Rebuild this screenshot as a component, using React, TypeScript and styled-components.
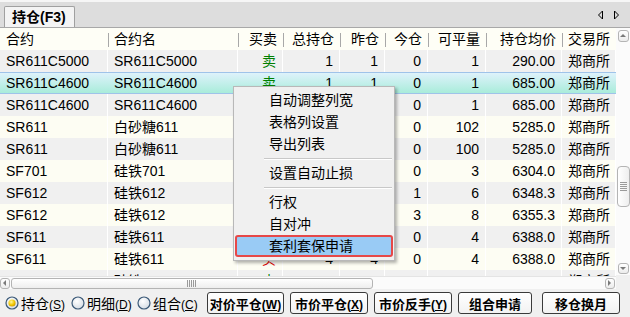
import styled, { createGlobalStyle } from 'styled-components'

const GlobalStyle = createGlobalStyle`
  html, body {
    margin: 0;
    padding: 0;
    background: #f0f0f0;
  }
  body {
    font-family: "Liberation Sans", "Noto Sans CJK SC", sans-serif;
  }
`

type Align = 'left' | 'right'

interface IColumn {
  key: keyof IRow
  title: string
  width: number
  align: Align
}

interface IRow {
  code: string
  name: string
  side: '买' | '卖'
  total: string
  yest: string
  today: string
  avail: string
  price: string
  exch: string
}

const columns: IColumn[] = [
  { key: 'code', title: '合约', width: 108, align: 'left' },
  { key: 'name', title: '合约名', width: 130, align: 'left' },
  { key: 'side', title: '买卖', width: 45, align: 'right' },
  { key: 'total', title: '总持仓', width: 57, align: 'right' },
  { key: 'yest', title: '昨仓', width: 45, align: 'right' },
  { key: 'today', title: '今仓', width: 43, align: 'right' },
  { key: 'avail', title: '可平量', width: 58, align: 'right' },
  { key: 'price', title: '持仓均价', width: 76, align: 'right' },
  { key: 'exch', title: '交易所', width: 54, align: 'left' },
]

const row = (
  code: string,
  name: string,
  side: '买' | '卖',
  total: string,
  yest: string,
  today: string,
  avail: string,
  price: string,
): IRow => ({ code, name, side, total, yest, today, avail, price, exch: '郑商所' })

const rows: IRow[] = [
  row('SR611C5000', 'SR611C5000', '卖', '1', '1', '0', '1', '290.00'),
  row('SR611C4600', 'SR611C4600', '卖', '1', '1', '0', '1', '685.00'),
  row('SR611C4600', 'SR611C4600', '卖', '1', '1', '0', '1', '685.00'),
  row('SR611', '白砂糖611', '买', '102', '102', '0', '102', '5285.0'),
  row('SR611', '白砂糖611', '买', '100', '100', '0', '100', '5285.0'),
  row('SF701', '硅铁701', '买', '3', '3', '0', '3', '6304.0'),
  row('SF612', '硅铁612', '买', '7', '6', '1', '6', '6348.3'),
  row('SF612', '硅铁612', '买', '11', '8', '3', '8', '6355.3'),
  row('SF611', '硅铁611', '买', '4', '4', '0', '4', '6388.0'),
  row('SF611', '硅铁611', '买', '4', '4', '0', '4', '6388.0'),
  row('SF609', '硅铁609', '卖', '2', '2', '0', '2', '6120.0'),
]

const SELECTED = 1

type MenuEntry = { label: string; active?: boolean } | 'sep'

const menu: MenuEntry[] = [
  { label: '自动调整列宽' },
  { label: '表格列设置' },
  { label: '导出列表' },
  'sep',
  { label: '设置自动止损' },
  'sep',
  { label: '行权' },
  { label: '自对冲' },
  { label: '套利套保申请', active: true },
]

const radios = [
  { label: '持仓', key: 'S', checked: true },
  { label: '明细', key: 'D' },
  { label: '组合', key: 'C' },
]

const buttons = [
  { label: '对价平仓', key: 'W', width: 77 },
  { label: '市价平仓', key: 'X', width: 78 },
  { label: '市价反手', key: 'Y', width: 78 },
  { label: '组合申请', width: 74 },
  { label: '移仓换月', width: 78 },
]

function Radio({ checked }: { checked?: boolean }) {
  return (
    <svg width="14" height="14" viewBox="0 0 14 14">
      <defs>
        <radialGradient id="rbg" cx="0.4" cy="0.35" r="0.7">
          <stop offset="0" stopColor="#ffffff" />
          <stop offset="1" stopColor="#d4dbe3" />
        </radialGradient>
        <radialGradient id="rdot" cx="0.4" cy="0.35" r="0.7">
          <stop offset="0" stopColor="#fff7a0" />
          <stop offset="0.6" stopColor="#f2c800" />
          <stop offset="1" stopColor="#c89400" />
        </radialGradient>
      </defs>
      <circle cx="7" cy="7" r="6" fill="url(#rbg)" stroke="#3c5a78" strokeWidth="1.2" />
      {checked && <circle cx="7" cy="7" r="3.6" fill="url(#rdot)" />}
    </svg>
  )
}

function Arrow({ dir, color = '#7a7a7a' }: { dir: 'up' | 'down' | 'left' | 'right'; color?: string }) {
  const pts = {
    up: '1,5 4,2 7,5',
    down: '1,2 4,5 7,2',
    left: '5,1 2,4 5,7',
    right: '2,1 5,4 2,7',
  }[dir]
  return (
    <svg width="8" height="8" viewBox="0 0 8 8">
      <polygon points={pts} fill={color} />
    </svg>
  )
}

function Grip({ vertical }: { vertical?: boolean }) {
  const lines = [0, 2, 4, 6, 8]
  return vertical ? (
    <svg width="7" height="10" viewBox="0 0 7 10">
      {lines.map((y) => (
        <line key={y} x1="0" y1={y + 0.5} x2="7" y2={y + 0.5} stroke="#9a9a9a" />
      ))}
    </svg>
  ) : (
    <svg width="10" height="7" viewBox="0 0 10 7">
      {lines.map((x) => (
        <line key={x} x1={x + 0.5} y1="0" x2={x + 0.5} y2="7" stroke="#9a9a9a" />
      ))}
    </svg>
  )
}

export default function App() {
  return (
    <Window>
      <GlobalStyle />
      <TabBar>
        <Tab>持仓(F3)</Tab>
        <TabArrows>
          <svg width="7" height="10" viewBox="0 0 7 10">
            <polygon points="5.5,1 1.5,5 5.5,9" fill="none" stroke="#000" />
          </svg>
          <svg width="7" height="10" viewBox="0 0 7 10">
            <polygon points="1.5,1 5.5,5 1.5,9" fill="none" stroke="#000" />
          </svg>
        </TabArrows>
      </TabBar>

      <Body>
        <GridColumn>
          <Table>
            <HeaderRow>
              {columns.map((c, i) => (
                <HeaderCell key={c.key} $w={c.width} $align={c.align} $sep={i > 0}>
                  {c.title}
                </HeaderCell>
              ))}
            </HeaderRow>
            {rows.map((r, i) => (
              <Row key={i} $variant={i === SELECTED ? 'selected' : i % 2 === 0 ? 'gray' : 'cream'}>
                {columns.map((c) => (
                  <Cell
                    key={c.key}
                    $w={c.width}
                    $align={c.align}
                    $color={c.key === 'side' ? (r.side === '卖' ? '#008000' : '#e00000') : undefined}
                  >
                    {r[c.key]}
                  </Cell>
                ))}
              </Row>
            ))}
          </Table>
          <HScroll>
            <ScrollBtn $w={10}>
              <Arrow dir="left" />
            </ScrollBtn>
            <HThumb>
              <Grip />
            </HThumb>
            <ScrollBtn $w={10} $push>
              <Arrow dir="right" />
            </ScrollBtn>
          </HScroll>
        </GridColumn>

        <VScroll>
          <ScrollBtn $w={11} $h={12}>
            <Arrow dir="up" />
          </ScrollBtn>
          <VThumb $offset={124}>
            <Grip vertical />
          </VThumb>
          <ScrollBtn $w={11} $h={11} $push>
            <Arrow dir="down" />
          </ScrollBtn>
          <Corner />
        </VScroll>
      </Body>

      <BottomBar>
        <RadioGroup>
          {radios.map((r) => (
            <RadioLabel key={r.key}>
              <Radio checked={r.checked} />
              <span>
                {r.label}
                <Key>
                  (<u>{r.key}</u>)
                </Key>
              </span>
            </RadioLabel>
          ))}
        </RadioGroup>
        <ButtonRow>
          {buttons.map((b) => (
            <ActionButton key={b.label} $w={b.width}>
              {b.label}
              {b.key && (
                <Key>
                  (<u>{b.key}</u>)
                </Key>
              )}
            </ActionButton>
          ))}
        </ButtonRow>
      </BottomBar>

      <ContextMenu>
        {menu.map((m, i) =>
          m === 'sep' ? (
            <MenuSep key={i} />
          ) : (
            <MenuItem key={i} $active={m.active}>
              {m.label}
            </MenuItem>
          ),
        )}
      </ContextMenu>
    </Window>
  )
}

const Window = styled.div`
  position: relative;
  width: 630px;
  height: 317px;
  display: flex;
  flex-direction: column;
  background: #f0f0f0;
  overflow: hidden;
  color: #000;
  font-size: 14px;
`

const TabBar = styled.div`
  height: 28px;
  box-sizing: border-box;
  display: flex;
  align-items: flex-end;
  justify-content: space-between;
  padding-left: 4px;
  background: #dddddd;
  border-top: 2px solid #f6f6f6;
  border-bottom: 1px solid #a8a8a8;
`

const Tab = styled.div`
  height: 21px;
  box-sizing: border-box;
  padding: 0 8px 0 7px;
  border: 1px solid #a0a0a0;
  border-bottom: none;
  border-radius: 2px 2px 0 0;
  background: #f4f4f4;
  font-weight: bold;
  font-size: 14px;
  line-height: 20px;
`

const TabArrows = styled.div`
  align-self: center;
  display: flex;
  gap: 9px;
  padding-right: 10px;
  margin-top: 1px;
`

const Body = styled.div`
  display: flex;
  height: 261px;
`

const GridColumn = styled.div`
  width: 616px;
  display: flex;
  flex-direction: column;
`

const Table = styled.div`
  height: 248px;
  overflow: hidden;
  background: #fdfdf5;
`

const HeaderRow = styled.div`
  display: flex;
  height: 22px;
  background: #fefef6;
`

const HeaderCell = styled.div<{ $w: number; $align: Align; $sep: boolean }>`
  position: relative;
  width: ${(p) => p.$w}px;
  flex: none;
  box-sizing: border-box;
  padding: 0 6px;
  text-align: ${(p) => p.$align};
  line-height: 22px;
  white-space: nowrap;

  &::before {
    content: '';
    display: ${(p) => (p.$sep ? 'block' : 'none')};
    position: absolute;
    left: 0;
    top: 5px;
    width: 1px;
    height: 14px;
    background: #a8a8a8;
  }
`

const variants = {
  gray: 'background: #f0f0f0;',
  cream: 'background: #fdfdf3;',
  selected: `
    background: linear-gradient(#def2fb, #a9ecda);
    border-top: 1px solid #9fc3e9;
    border-bottom: 1px solid #9fc3e9;
  `,
}

const Row = styled.div<{ $variant: keyof typeof variants }>`
  display: flex;
  height: 22px;
  box-sizing: border-box;
  ${(p) => variants[p.$variant]}

  & > div {
    border-right-color: ${(p) => (p.$variant === 'selected' ? 'transparent' : '#ffffff')};
    line-height: ${(p) => (p.$variant === 'selected' ? '20px' : '22px')};
  }
`

const Cell = styled.div<{ $w: number; $align: Align; $color?: string }>`
  width: ${(p) => p.$w}px;
  flex: none;
  box-sizing: border-box;
  padding: 0 6px;
  border-right: 1px solid #ffffff;
  text-align: ${(p) => p.$align};
  color: ${(p) => p.$color ?? '#000'};
  white-space: nowrap;
  overflow: hidden;
`

const ScrollBtn = styled.div<{ $w: number; $h?: number; $push?: boolean }>`
  width: ${(p) => p.$w}px;
  height: ${(p) => p.$h ?? 11}px;
  flex: none;
  box-sizing: border-box;
  display: flex;
  align-items: center;
  justify-content: center;
  border: 1px solid #b4b4b4;
  border-radius: 3px;
  background: linear-gradient(#ffffff, #ececec);
  margin-${(p) => (p.$h ? 'top' : 'left')}: ${(p) => (p.$push ? 'auto' : '0')};
`

const HScroll = styled.div`
  height: 13px;
  display: flex;
  align-items: center;
  gap: 1px;
  padding: 0 1px 0 0;
  background: #fbfbfb;
  border-top: 1px solid #e4e4e4;
  box-sizing: border-box;
`

const HThumb = styled.div`
  width: 362px;
  height: 11px;
  box-sizing: border-box;
  display: flex;
  align-items: center;
  justify-content: center;
  border: 1px solid #b4b4b4;
  border-radius: 3px;
  background: linear-gradient(#ffffff, #eeeeee);
`

const VScroll = styled.div`
  width: 14px;
  display: flex;
  flex-direction: column;
  align-items: center;
  padding-top: 2px;
  box-sizing: border-box;
  background: #fbfbfb;
`

const VThumb = styled.div<{ $offset: number }>`
  margin-top: ${(p) => p.$offset}px;
  width: 13px;
  height: 41px;
  box-sizing: border-box;
  display: flex;
  align-items: center;
  justify-content: center;
  border: 1px solid #b4b4b4;
  border-radius: 4px;
  background: linear-gradient(90deg, #ffffff, #eeeeee);
`

const Corner = styled.div`
  height: 14px;
  width: 14px;
  margin-top: 1px;
  background: #f0f0f0;
`

const BottomBar = styled.div`
  height: 28px;
  display: flex;
  align-items: center;
  padding-left: 5px;
  background: #f0f0f0;
`

const RadioGroup = styled.div`
  display: flex;
  width: 202px;
`

const RadioLabel = styled.label`
  width: 66px;
  display: flex;
  align-items: center;
  gap: 2px;
  font-size: 14px;
  white-space: nowrap;

  & svg {
    flex: none;
  }
`

const Key = styled.span`
  font-size: 12px;

  & u {
    text-underline-offset: 1px;
  }
`

const ButtonRow = styled.div`
  display: flex;
  gap: 6px;

  & > :last-child {
    margin-left: 4px;
  }
`

const ActionButton = styled.button<{ $w: number }>`
  width: ${(p) => p.$w}px;
  height: 22px;
  padding: 0;
  box-sizing: border-box;
  border: 1px solid #3a3a3a;
  border-radius: 3px;
  background: linear-gradient(#ffffff, #f2f2f2);
  font-family: "Liberation Sans", "Noto Sans CJK SC", sans-serif;
  font-size: 13px;
  font-weight: bold;
  color: #000;
  white-space: nowrap;
`

const ContextMenu = styled.div`
  position: absolute;
  left: 233px;
  top: 86px;
  width: 162px;
  box-sizing: border-box;
  padding: 2px 0 3px;
  background: #f0f0f0;
  border: 1px solid #b8b8b8;
  box-shadow: 2px 2px 3px rgba(0, 0, 0, 0.3);
`

const MenuItem = styled.div<{ $active?: boolean }>`
  height: 22px;
  box-sizing: border-box;
  margin: 0 1px;
  padding-left: ${(p) => (p.$active ? '32px' : '34px')};
  line-height: ${(p) => (p.$active ? '18px' : '22px')};
  font-size: 14px;
  color: #000;
  white-space: nowrap;
  ${(p) =>
    p.$active &&
    `
    background: #99cbf5;
    border: 2px solid #e64848;
    border-radius: 3px;
  `}
`

const MenuSep = styled.div`
  height: 7px;
  margin: 0 2px 0 30px;
  display: flex;
  align-items: center;

  &::before {
    content: '';
    flex: 1;
    height: 1px;
    background: #c8c8c8;
    box-shadow: 0 1px 0 #ffffff;
  }
`
